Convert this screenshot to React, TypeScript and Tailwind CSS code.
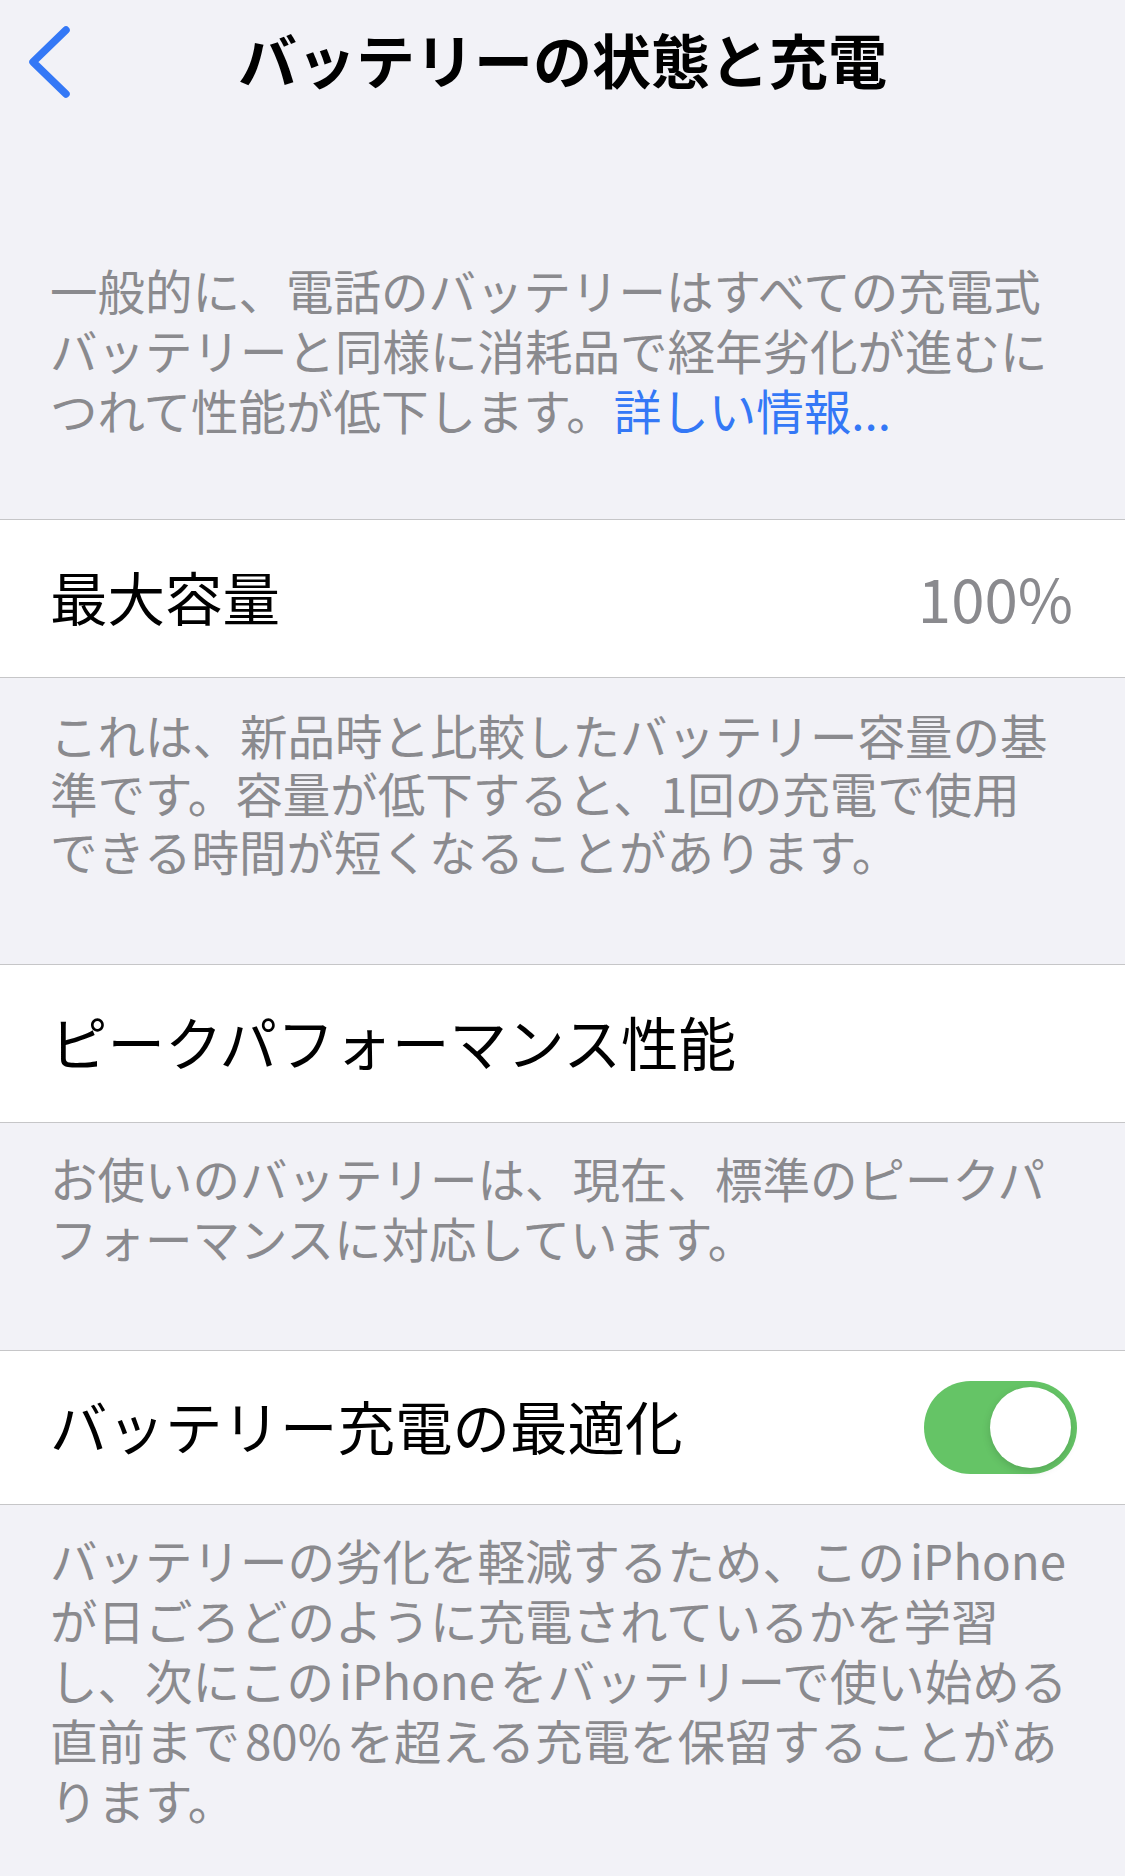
import type { ReactNode } from "react";

const FONT = "font-['Noto_Sans_CJK_JP','Noto_Sans',sans-serif]";

function Lat({ children }: { children: ReactNode }) {
  return <span className="mx-[5px]">{children}</span>;
}

function Footer({ lines, className = "" }: { lines: ReactNode[]; className?: string }) {
  return (
    <div className={`px-[50px] text-[47.5px] text-[#8a8a8e] whitespace-nowrap ${className}`}>
      {lines.map((l, i) => (
        <div key={i}>{l}</div>
      ))}
    </div>
  );
}

function Row({ children, className = "" }: { children: ReactNode; className?: string }) {
  return (
    <div
      className={`flex items-center justify-between border-y border-[#c6c6c8] bg-white pl-[50px] text-[57.5px] text-black ${className}`}
    >
      {children}
    </div>
  );
}

function Toggle() {
  return (
    <div className="flex h-[93px] w-[153px] items-center justify-end rounded-full bg-[#65c466] pr-[6px]">
      <div className="h-[81px] w-[81px] rounded-full bg-white shadow-[0_3px_8px_rgba(0,0,0,0.15)]" />
    </div>
  );
}

export default function App() {
  return (
    <div className={`h-[1876px] w-[1125px] overflow-hidden bg-[#f2f2f7] ${FONT}`}>
      {/* nav bar */}
      <div className="grid h-[124px] grid-cols-[1fr_auto_1fr] items-center">
        <div className="flex items-center pl-[26px]">
          <svg width="48" height="80" viewBox="0 0 48 80" fill="none">
            <path d="M40 8 L7 40 L40 72" stroke="#3478f6" strokeWidth="7.5" strokeLinecap="round" strokeLinejoin="round" />
          </svg>
        </div>
        <h1 className="pb-[7px] text-[59px] font-bold leading-none text-black">バッテリーの状態と充電</h1>
        <div />
      </div>

      <Footer
        className="pt-[136px] pb-[79px] leading-[60px]"
        lines={[
          "一般的に、電話のバッテリーはすべての充電式",
          "バッテリーと同様に消耗品で経年劣化が進むに",
          <>
            つれて性能が低下します。<span className="text-[#3478f6]">詳しい情報...</span>
          </>,
        ]}
      />

      <Row className="h-[159px] pr-[52px] pb-[4px]">
        <span>最大容量</span>
        <span className="text-[60px] text-[#8a8a8e]">100%</span>
      </Row>

      <Footer
        className="pt-[28px] pb-[84px] leading-[58px]"
        lines={[
          "これは、新品時と比較したバッテリー容量の基",
          "準です。容量が低下すると、1回の充電で使用",
          "できる時間が短くなることがあります。",
        ]}
      />

      <Row className="h-[159px] pr-[50px] pb-[4px]">
        <span>ピークパフォーマンス性能</span>
      </Row>

      <Footer
        className="pt-[25px] pb-[82px] leading-[60px]"
        lines={["お使いのバッテリーは、現在、標準のピークパ", "フォーマンスに対応しています。"]}
      />

      <Row className="h-[155px] pr-[48px]">
        <span className="pb-[4px]">バッテリー充電の最適化</span>
        <Toggle />
      </Row>

      <Footer
        className="pt-[25px] leading-[60px]"
        lines={[
          <>
            バッテリーの劣化を軽減するため、この<Lat>iPhone</Lat>
          </>,
          "が日ごろどのように充電されているかを学習",
          <>
            し、次にこの<Lat>iPhone</Lat>をバッテリーで使い始める
          </>,
          <>
            直前まで<Lat>80%</Lat>を超える充電を保留することがあ
          </>,
          "ります。",
        ]}
      />
    </div>
  );
}
